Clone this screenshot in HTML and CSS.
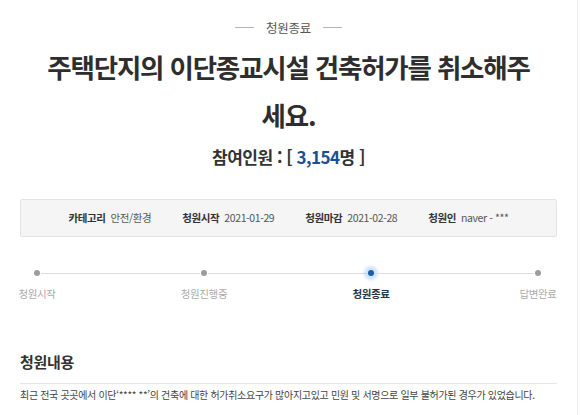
FILE: index.html
```html
<!DOCTYPE html>
<html lang="ko">
<head>
<meta charset="utf-8">
<title>청원종료</title>
<link rel="stylesheet" href="styles.css">
</head>
<body>
<div class="page">
  <div class="status"><span class="status-line"></span><span class="status-text">청원종료</span><span class="status-line"></span></div>
  <h1 class="title">주택단지의 이단종교시설 건축허가를 취소해주세요.</h1>
  <div class="count">참여인원 : [ <span class="count-num">3,154</span>명 ]</div>
  <div class="info">
    <div class="info-item"><span class="info-label">카테고리</span><span class="info-value">안전/환경</span></div>
    <div class="info-item"><span class="info-label">청원시작</span><span class="info-value">2021-01-29</span></div>
    <div class="info-item"><span class="info-label">청원마감</span><span class="info-value">2021-02-28</span></div>
    <div class="info-item"><span class="info-label">청원인</span><span class="info-value">naver - ***</span></div>
  </div>
  <div class="steps">
    <div class="step"><span class="dot"></span><span class="step-label">청원시작</span></div>
    <div class="seg"></div>
    <div class="step"><span class="dot"></span><span class="step-label">청원진행중</span></div>
    <div class="seg"></div>
    <div class="step active"><span class="dot"></span><span class="step-label">청원종료</span></div>
    <div class="seg"></div>
    <div class="step"><span class="dot"></span><span class="step-label">답변완료</span></div>
  </div>
  <h2 class="section-title">청원내용</h2>
  <p class="content">최근 전국 곳곳에서 이단‘**** **’의 건축에 대한 허가취소요구가 많아지고있고 민원 및 서명으로 일부 불허가된 경우가 있었습니다.</p>
</div>
</body>
</html>
```

FILE: styles.css
```css
html, body {
  margin: 0;
  padding: 0;
  background: #fff;
}
body {
  font-family: "Noto Sans CJK KR", "Noto Sans", sans-serif;
  color: #333;
}
.page {
  width: 537px;
  height: 415px;
  padding: 17px 20px 0 20px;
  border-right: 1px solid #ececec;
  box-sizing: content-box;
  overflow: hidden;
}
.status {
  display: flex;
  justify-content: center;
  align-items: center;
  height: 20px;
  gap: 12px;
}
.status-line {
  width: 19px;
  height: 1px;
  background: #b5b5b5;
}
.status-text {
  font-size: 12.5px;
  color: #555;
  letter-spacing: -0.3px;
}
.title {
  margin: 6px auto 0;
  max-width: 496px;
  font-size: 26.5px;
  line-height: 48px;
  font-weight: 700;
  letter-spacing: -1.2px;
  text-align: center;
  color: #2e2e2e;
}
.count {
  margin-top: 6px;
  height: 24px;
  line-height: 24px;
  text-align: center;
  font-size: 17px;
  font-weight: 700;
  color: #333;
  letter-spacing: -0.5px;
}
.count-num {
  color: #1c4f8f;
}
.info {
  margin-top: 30px;
  display: flex;
  justify-content: center;
  gap: 31px;
  padding: 11px 0;
  background: #f5f5f5;
  border: 1px solid #e4e4e4;
  border-radius: 2px;
  font-size: 10.5px;
  line-height: 14px;
  letter-spacing: -0.4px;
}
.info-item {
  display: flex;
  gap: 5px;
}
.info-label {
  font-weight: 700;
  color: #333;
}
.info-value {
  color: #555;
}
.steps {
  display: flex;
  align-items: flex-start;
  margin: 32px 15px 0 13px;
}
.step {
  width: 8px;
  display: flex;
  flex-direction: column;
  align-items: center;
}
.dot {
  width: 6px;
  height: 6px;
  margin: 1px;
  border-radius: 50%;
  background: #9d9d9d;
}
.step.active .dot {
  background: #1a5cb0;
  box-shadow: 0 0 3px 4px rgba(120, 175, 240, 0.35);
}
.step-label {
  margin-top: 10px;
  white-space: nowrap;
  font-size: 10.5px;
  line-height: 14px;
  color: #aaa;
  letter-spacing: -0.4px;
}
.step.active .step-label {
  color: #2a3340;
  font-weight: 700;
}
.seg {
  flex: 1;
  height: 1px;
  margin-top: 3.5px;
  background: #dcdcdc;
}
.section-title {
  margin: 51px 0 0;
  padding-bottom: 11px;
  border-bottom: 1px solid #e6e6e6;
  font-size: 15px;
  line-height: 20px;
  font-weight: 700;
  color: #333;
  letter-spacing: -0.3px;
}
.content {
  margin: 4px 0 0;
  font-size: 10px;
  line-height: 14px;
  color: #444;
  letter-spacing: -0.32px;
  white-space: nowrap;
}
```
